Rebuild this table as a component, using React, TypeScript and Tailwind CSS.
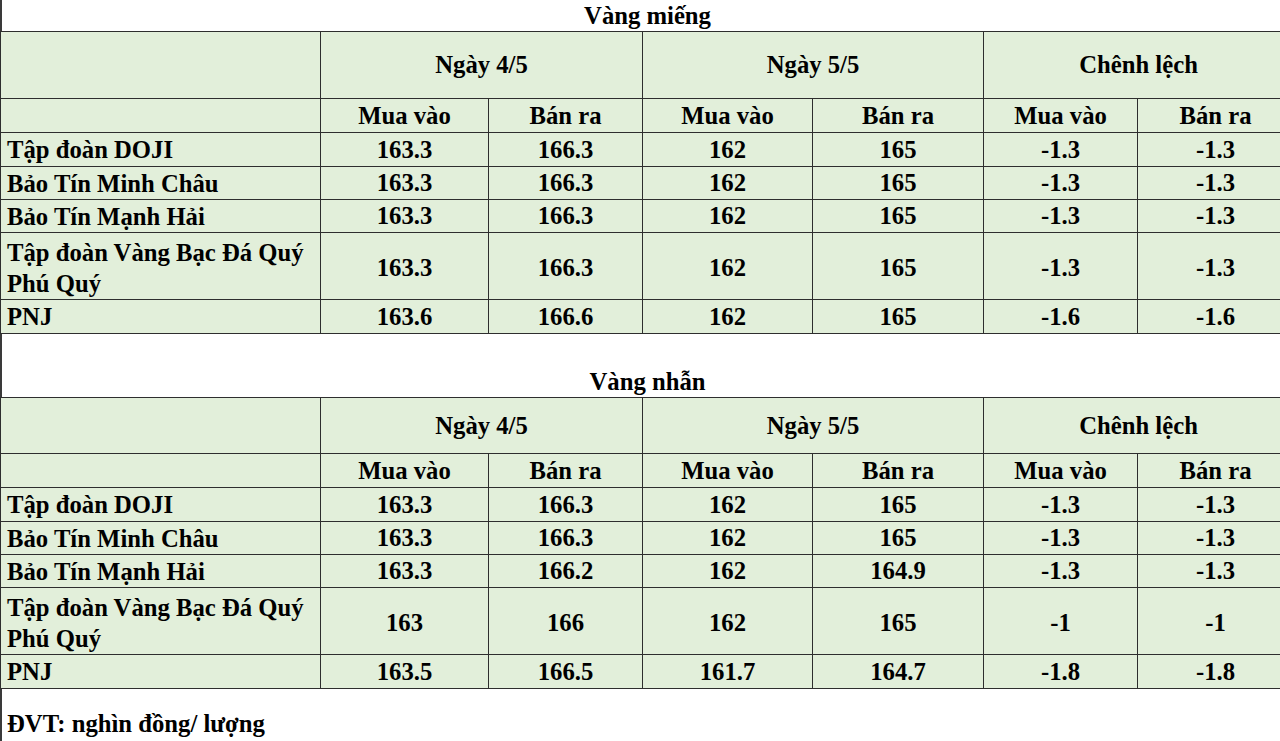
import React from "react";

type Row = [string, string, string, string, string, string, string];

const rows1: Row[] = [
  ["Tập đoàn DOJI", "163.3", "166.3", "162", "165", "-1.3", "-1.3"],
  ["Bảo Tín Minh Châu", "163.3", "166.3", "162", "165", "-1.3", "-1.3"],
  ["Bảo Tín Mạnh Hải", "163.3", "166.3", "162", "165", "-1.3", "-1.3"],
  ["Tập đoàn Vàng Bạc Đá Quý Phú Quý", "163.3", "166.3", "162", "165", "-1.3", "-1.3"],
  ["PNJ", "163.6", "166.6", "162", "165", "-1.6", "-1.6"],
];

const rows2: Row[] = [
  ["Tập đoàn DOJI", "163.3", "166.3", "162", "165", "-1.3", "-1.3"],
  ["Bảo Tín Minh Châu", "163.3", "166.3", "162", "165", "-1.3", "-1.3"],
  ["Bảo Tín Mạnh Hải", "163.3", "166.2", "162", "164.9", "-1.3", "-1.3"],
  ["Tập đoàn Vàng Bạc Đá Quý Phú Quý", "163", "166", "162", "165", "-1", "-1"],
  ["PNJ", "163.5", "166.5", "161.7", "164.7", "-1.8", "-1.8"],
];

const rowHeights = ["h-[34px]", "h-[33px]", "h-[33px]", "h-[67px]", "h-[34px]"];

function PriceTable({ rows, headHeight }: { rows: Row[]; headHeight: string }) {
  const cell = "border border-[#2e2e2e] p-0 text-center align-middle";
  return (
    <table className="w-[1293px] table-fixed border-collapse bg-[#e2efda]">
      <colgroup>
        <col className="w-[320px]" />
        <col className="w-[168px]" />
        <col className="w-[154px]" />
        <col className="w-[170px]" />
        <col className="w-[171px]" />
        <col className="w-[154px]" />
        <col className="w-[156px]" />
      </colgroup>
      <tbody>
        <tr className={headHeight}>
          <td className={cell}></td>
          <td className={cell} colSpan={2}>Ngày 4/5</td>
          <td className={cell} colSpan={2}>Ngày 5/5</td>
          <td className={cell} colSpan={2}>Chênh lệch</td>
        </tr>
        <tr className="h-[34px]">
          <td className={cell}></td>
          <td className={cell}>Mua vào</td>
          <td className={cell}>Bán ra</td>
          <td className={cell}>Mua vào</td>
          <td className={cell}>Bán ra</td>
          <td className={cell}>Mua vào</td>
          <td className={cell}>Bán ra</td>
        </tr>
        {rows.map((r, i) => {
          const twoLine = i === 3;
          return (
            <tr key={i} className={rowHeights[i]}>
              <td
                className={
                  twoLine
                    ? "border border-[#2e2e2e] pt-[4px] pb-0 pl-[6px] pr-[4px] text-left align-middle leading-[31px]"
                    : "border border-[#2e2e2e] p-0 pl-[6px] pr-[4px] text-left align-middle leading-[31px]"
                }
              >
                {r[0]}
              </td>
              {r.slice(1).map((v, j) => (
                <td key={j} className={twoLine ? cell + " pt-[3px]" : cell}>
                  {v}
                </td>
              ))}
            </tr>
          );
        })}
      </tbody>
    </table>
  );
}

export default function App() {
  return (
    <div className="w-[1280px] h-[741px] overflow-hidden bg-white text-black [font-family:Liberation_Serif,serif] font-bold text-[24.7px] leading-[30px]">
      <div className="w-[1293px]">
        <div className="h-[31px] flex items-end justify-center border-l-2 border-[#3a3a3a]">
          <span className="leading-[30px]">Vàng miếng</span>
        </div>
        <PriceTable rows={rows1} headHeight="h-[67px]" />
        <div className="h-[33px] border-l-2 border-[#3a3a3a]" />
        <div className="h-[30px] flex items-center justify-center border-l-2 border-[#3a3a3a]">
          <span>Vàng nhẫn</span>
        </div>
        <PriceTable rows={rows2} headHeight="h-[56px]" />
        <div className="h-[20px] border-l-2 border-[#3a3a3a]" />
        <div className="h-[40px] pl-[5px] border-l-2 border-[#3a3a3a]">
          <span>ĐVT: nghìn đồng/ lượng</span>
        </div>
      </div>
    </div>
  );
}
